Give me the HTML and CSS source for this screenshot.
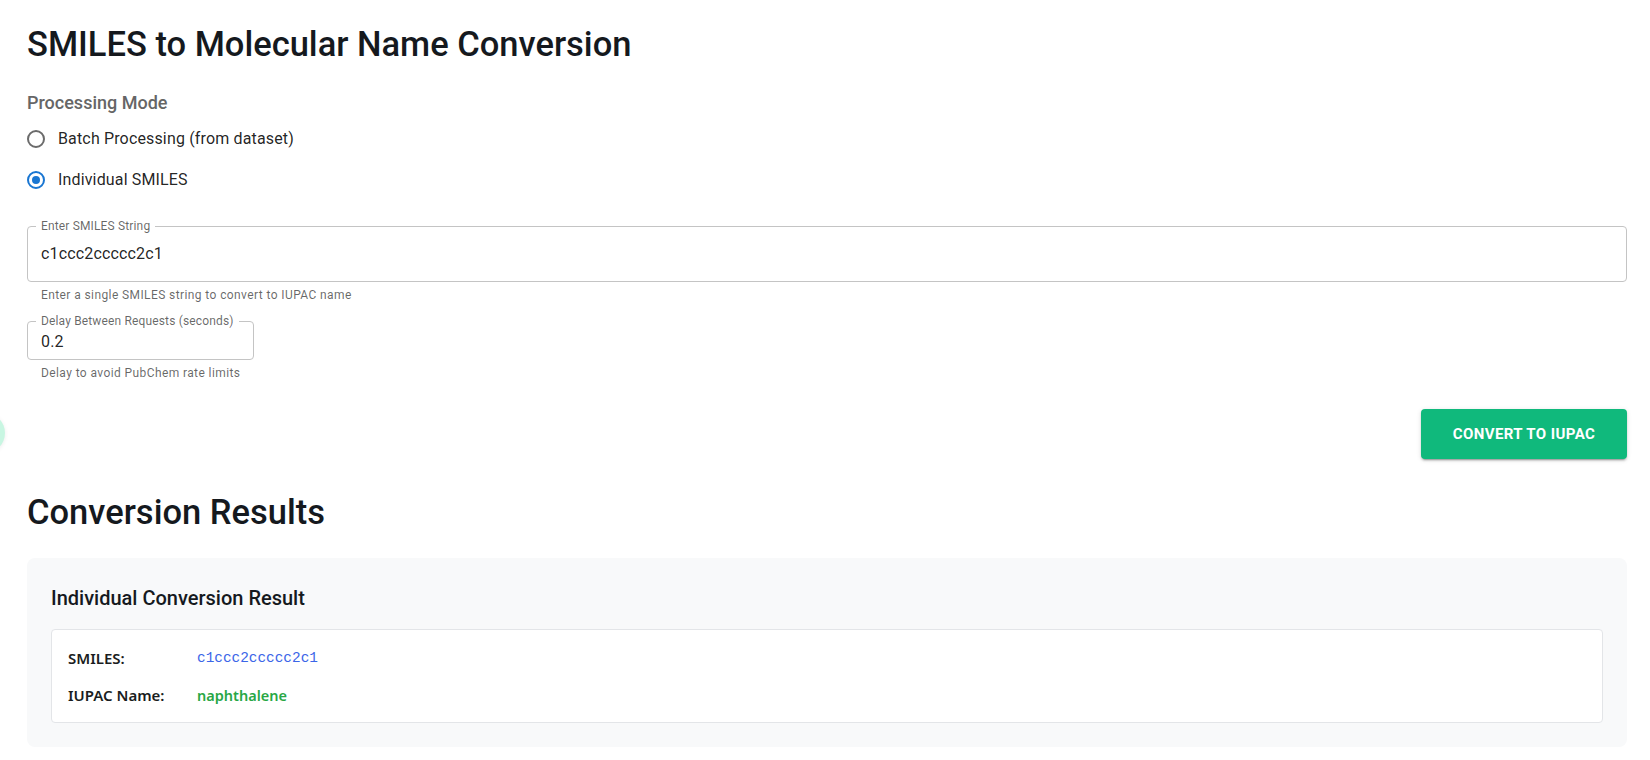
FILE: index.html
```html
<!DOCTYPE html>
<html lang="en">
<head>
<meta charset="utf-8">
<title>SMILES to Molecular Name Conversion</title>
<link rel="stylesheet" href="styles.css">
</head>
<body>
<div class="fab-peek"></div>
<main class="page">
  <h1 class="title">SMILES to Molecular Name Conversion</h1>

  <div class="mode">
    <div class="mode-label">Processing Mode</div>
    <label class="radio-row">
      <span class="radio"></span>
      <span class="radio-text">Batch Processing (from dataset)</span>
    </label>
    <label class="radio-row">
      <span class="radio checked"><span class="dot"></span></span>
      <span class="radio-text">Individual SMILES</span>
    </label>
  </div>

  <fieldset class="field field-wide">
    <legend>Enter SMILES String</legend>
    <input class="field-input" type="text" value="c1ccc2ccccc2c1">
  </fieldset>
  <div class="helper">Enter a single SMILES string to convert to IUPAC name</div>

  <fieldset class="field field-small">
    <legend>Delay Between Requests (seconds)</legend>
    <input class="field-input small" type="text" value="0.2">
  </fieldset>
  <div class="helper">Delay to avoid PubChem rate limits</div>

  <div class="actions">
    <button class="convert-btn" type="button">Convert to IUPAC</button>
  </div>

  <h2 class="title results-title">Conversion Results</h2>

  <section class="result-card">
    <h3 class="result-heading">Individual Conversion Result</h3>
    <div class="result-box">
      <div class="result-row">
        <span class="result-label">SMILES:</span>
        <span class="result-smiles">c1ccc2ccccc2c1</span>
      </div>
      <div class="result-row">
        <span class="result-label">IUPAC Name:</span>
        <span class="result-name">naphthalene</span>
      </div>
    </div>
  </section>
</main>
</body>
</html>
```

FILE: styles.css
```css
* { box-sizing: border-box; }

html, body {
  margin: 0;
  padding: 0;
  background: #ffffff;
  font-family: Roboto, "Liberation Sans", Arial, sans-serif;
  color: rgba(0, 0, 0, 0.87);
  overflow: hidden;
}

.page {
  padding: 23px 23px 0 27px;
}

.fab-peek {
  position: absolute;
  left: -35px;
  top: 413px;
  width: 40px;
  height: 40px;
  border-radius: 50%;
  background: #c8f6e2;
  box-shadow: 0 1px 4px rgba(0, 0, 0, 0.08);
}

.title {
  margin: 0;
  font-size: 34.5px;
  line-height: 42px;
  font-weight: 500;
  color: #15191e;
  letter-spacing: 0;
}

.mode {
  margin-top: 26px;
  display: flex;
  flex-direction: column;
}

.mode-label {
  font-size: 18px;
  line-height: 24px;
  font-weight: 500;
  color: #666666;
  margin-bottom: 3px;
}

.radio-row {
  display: flex;
  align-items: center;
  height: 41px;
}

.radio {
  width: 18px;
  height: 18px;
  border-radius: 50%;
  border: 2px solid #6b6b6b;
  display: flex;
  align-items: center;
  justify-content: center;
  margin-right: 13px;
}

.radio.checked {
  border-color: #1976d2;
}

.radio .dot {
  width: 8px;
  height: 8px;
  border-radius: 50%;
  background: #1976d2;
}

.radio-text {
  font-size: 16px;
  letter-spacing: 0.15px;
  color: rgba(0, 0, 0, 0.87);
}

.field {
  margin: 0;
  padding: 0 8px 0 8px;
  border: 1px solid #c4c4c4;
  border-radius: 4px;
  min-width: 0;
}

.field legend {
  padding: 0 5px;
  font-size: 12px;
  line-height: 14px;
  letter-spacing: 0.15px;
  color: rgba(0, 0, 0, 0.6);
}

.field-wide {
  margin-top: 19px;
  width: 100%;
}

.field-small {
  margin-top: 9px;
  width: 227px;
}

.field-input {
  display: block;
  width: 100%;
  border: none;
  outline: none;
  background: transparent;
  font-family: inherit;
  font-size: 16px;
  letter-spacing: 0.15px;
  line-height: 23px;
  height: 48px;
  padding: 9px 6px 16px 5px;
  color: rgba(0, 0, 0, 0.87);
}

.field-input.small {
  height: 31px;
  line-height: 20px;
  padding: 3px 6px 8px 5px;
}

.helper {
  margin: 3px 14px 0 14px;
  font-size: 12px;
  line-height: 20px;
  letter-spacing: 0.4px;
  color: rgba(0, 0, 0, 0.6);
}

.actions {
  display: flex;
  justify-content: flex-end;
  margin-top: 26px;
}

.convert-btn {
  height: 50px;
  width: 206px;
  padding: 0;
  white-space: nowrap;
  border: none;
  border-radius: 4px;
  background: #10b97c;
  color: #ffffff;
  font-family: Roboto, "Liberation Sans", Arial, sans-serif;
  font-size: 15px;
  font-weight: 700;
  letter-spacing: 0.4px;
  text-transform: uppercase;
  box-shadow: 0 3px 1px -2px rgba(0,0,0,0.2), 0 2px 2px 0 rgba(0,0,0,0.14), 0 1px 5px 0 rgba(0,0,0,0.12);
}

.results-title {
  margin-top: 32px;
}

.result-card {
  margin-top: 25px;
  background: #f8f9fa;
  border-radius: 8px;
  padding: 24px 24px 24px 24px;
}

.result-heading {
  margin: 0;
  font-size: 20px;
  line-height: 32px;
  font-weight: 500;
  color: #15191e;
}

.result-box {
  margin-top: 15px;
  background: #ffffff;
  border: 1px solid #e3e5e8;
  border-radius: 4px;
  padding: 16px 16px 15px 16px;
  display: flex;
  flex-direction: column;
  gap: 13px;
}

.result-row {
  display: grid;
  grid-template-columns: 129px 1fr;
  align-items: center;
  line-height: 24px;
}

.result-label {
  font-family: "Noto Sans", "Open Sans", sans-serif;
  font-size: 15px;
  font-weight: 600;
  color: #1a1d21;
}

.result-smiles {
  font-family: "Liberation Mono", "DejaVu Sans Mono", monospace;
  font-size: 14.4px;
  color: #3b66e8;
}

.result-name {
  font-family: "Noto Sans", "Open Sans", sans-serif;
  font-size: 14.5px;
  font-weight: 600;
  color: #28a745;
}
```
